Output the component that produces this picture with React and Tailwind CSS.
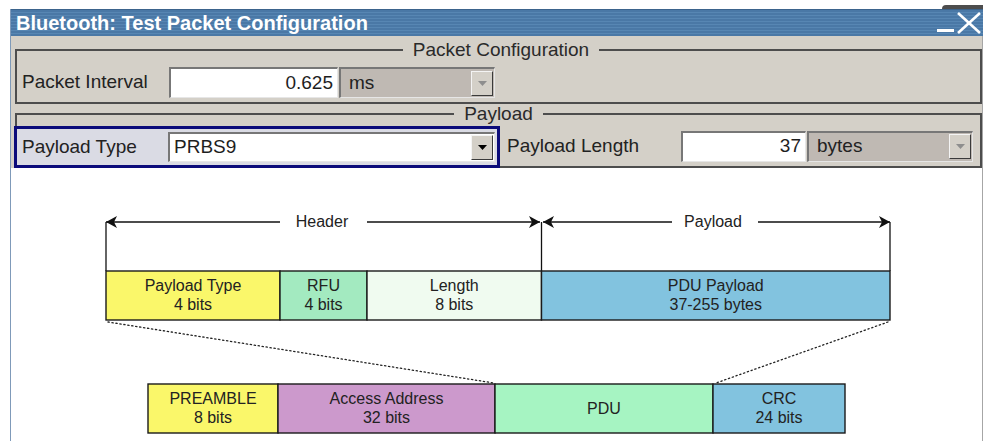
import React from 'react';

const ArrowButton = ({ disabled }) => (
  <div className="flex h-[25px] w-[22px] shrink-0 items-center justify-center border border-t-[#f4f4f4] border-l-[#f4f4f4] border-b-[#3a3a3a] border-r-[#3a3a3a] bg-[#d4d0c8]">
    <svg width="9" height="5" viewBox="0 0 9 5">
      <path d="M0 0h9L4.5 5z" fill={disabled ? '#8e8e8e' : '#000'} />
    </svg>
  </div>
);

const sunken = 'border-t-2 border-l-2 border-b border-r border-t-[#777] border-l-[#777] border-b-[#e6e6e6] border-r-[#e6e6e6]';

const NumberField = ({ value, width }) => (
  <div className={`flex h-[31px] items-center justify-end bg-white pr-[4px] text-[19px] text-[#1e1e1e] ${sunken} ${width}`}>
    {value}
  </div>
);

const UnitCombo = ({ unit, width }) => (
  <div className={`ml-px flex h-[31px] items-center justify-between bg-[#bfb9b3] pl-[8px] pr-[1px] text-[19px] text-[#222] ${sunken} ${width}`}>
    <span>{unit}</span>
    <ArrowButton disabled />
  </div>
);

const Head = ({ x, y, dir }) => {
  const d =
    dir === 'right'
      ? `M${x} ${y}L${x - 11} ${y - 6}L${x - 8} ${y}L${x - 11} ${y + 6}Z`
      : `M${x} ${y}L${x + 11} ${y - 6}L${x + 8} ${y}L${x + 11} ${y + 6}Z`;
  return <path d={d} fill="#111" />;
};

const Cell = ({ x, w, y, fill, lines }) => {
  const cx = x + w / 2;
  return (
    <g>
      <rect x={x} y={y} width={w} height={49} fill={fill} stroke="#1a1a1a" strokeWidth="1.4" />
      {lines.length === 1 ? (
        <text x={cx} y={y + 30} textAnchor="middle">{lines[0]}</text>
      ) : (
        <>
          <text x={cx} y={y + 20} textAnchor="middle">{lines[0]}</text>
          <text x={cx} y={y + 39} textAnchor="middle">{lines[1]}</text>
        </>
      )}
    </g>
  );
};

const PacketDiagram = () => (
  <svg width={971} height={274} viewBox="11 167 971 274" className="block" fontFamily="'Liberation Sans', Arial, sans-serif" fontSize="16" fill="#222">
    {/* dimension arrows */}
    <g stroke="#111" strokeWidth="1.3">
      <line x1="106" y1="221" x2="280" y2="221" />
      <line x1="367" y1="221" x2="540" y2="221" />
      <line x1="543" y1="221" x2="672" y2="221" />
      <line x1="758" y1="221" x2="890" y2="221" />
      <line x1="106" y1="221" x2="106" y2="270" />
      <line x1="541.5" y1="221" x2="541.5" y2="270" />
      <line x1="890" y1="221" x2="890" y2="270" />
    </g>
    <Head x={106} y={221} dir="left" />
    <Head x={540} y={221} dir="right" />
    <Head x={543} y={221} dir="left" />
    <Head x={890} y={221} dir="right" />
    <text x="322" y="226" textAnchor="middle">Header</text>
    <text x="713" y="226" textAnchor="middle">Payload</text>

    {/* PDU header + payload */}
    <Cell x={106} w={174} y={270} fill="#faf76a" lines={['Payload Type', '4 bits']} />
    <Cell x={280} w={87} y={270} fill="#a3eac0" lines={['RFU', '4 bits']} />
    <Cell x={367} w={174.5} y={270} fill="#f0fbf0" lines={['Length', '8 bits']} />
    <Cell x={541.5} w={348.5} y={270} fill="#82c3df" lines={['PDU Payload', '37-255 bytes']} />

    {/* zoom lines */}
    <g stroke="#222" strokeWidth="1.3" strokeDasharray="1.3 2.7" strokeLinecap="round">
      <line x1="108" y1="321" x2="494" y2="382" />
      <line x1="888" y1="321" x2="716" y2="382" />
    </g>

    {/* air packet */}
    <Cell x={148} w={130} y={383} fill="#faf76a" lines={['PREAMBLE', '8 bits']} />
    <Cell x={278} w={217} y={383} fill="#cc99cc" lines={['Access Address', '32 bits']} />
    <Cell x={495} w={218} y={383} fill="#a6f4c2" lines={['PDU']} />
    <Cell x={713} w={132} y={383} fill="#82c3df" lines={['CRC', '24 bits']} />
  </svg>
);

export default function App() {
  return (
    <div className="h-[441px] w-[983px] overflow-hidden bg-white font-['Liberation_Sans',Arial,sans-serif]">
      <div className="flex h-[9px] justify-end">
        <div className="mt-[5px] h-[4px] w-[41px] rounded-tl-[4px] bg-[#4d4d4d]" />
      </div>

      <div className="ml-[10px] flex h-[432px] flex-col border-l border-[#7f9ab9]">
        {/* title bar */}
        <div className="flex h-[27px] shrink-0 items-center justify-between border-t border-[#3b638c] bg-[repeating-linear-gradient(180deg,#4a78a6_0px,#4a78a6_2px,#5786b3_2px,#5786b3_3px)] pl-[5px]">
          <span className="text-[20px] font-bold leading-none text-white">Bluetooth: Test Packet Configuration</span>
          <svg width="46" height="26" viewBox="0 0 46 26">
            <line x1="0" y1="20.5" x2="17" y2="20.5" stroke="#fff" strokeWidth="3" />
            <line x1="21" y1="3" x2="43" y2="23" stroke="#fff" strokeWidth="2.6" />
            <line x1="43" y1="3" x2="21" y2="23" stroke="#fff" strokeWidth="2.6" />
          </svg>
        </div>

        <div className="flex flex-1 flex-col border-r border-[#a6a6a6] bg-[#d4d0c8]">
          <div className="pl-[4px]">
            <fieldset className="mt-[5px] border-2 border-[#4d4d4d] pb-[4px] pl-[5px] pt-[8px]">
              <legend className="mx-auto px-[10px] text-[19px] leading-[18px] text-[#2a2a2a]">Packet Configuration</legend>
              <div className="flex items-center">
                <span className="w-[147px] text-[19px] text-[#222]">Packet Interval</span>
                <NumberField value="0.625" width="w-[169px]" />
                <UnitCombo unit="ms" width="w-[156px]" />
              </div>
            </fieldset>

            <fieldset className="mt-px border-2 border-[#4d4d4d] pt-[3px]">
              <legend className="mx-auto px-[10px] text-[19px] leading-[18px] text-[#2a2a2a]">Payload</legend>
              <div className="flex items-center">
                <div className="relative -mb-[2px] -ml-[3px] flex h-[42px] w-[486px] items-center border-[3px] border-[#0b0b7a] bg-[#dadbe4] pl-[5px]">
                  <span className="w-[146px] text-[19px] text-[#222]">Payload Type</span>
                  <div className={`flex h-[30px] w-[327px] items-center justify-between bg-white pl-[4px] pr-px text-[19px] text-[#1e1e1e] ${sunken}`}>
                    <span>PRBS9</span>
                    <ArrowButton />
                  </div>
                </div>
                <span className="ml-[7px] w-[174px] text-[19px] text-[#222]">Payload Length</span>
                <NumberField value="37" width="w-[125px]" />
                <UnitCombo unit="bytes" width="w-[166px]" />
              </div>
            </fieldset>
          </div>

          <div className="flex-1 overflow-hidden bg-white">
            <PacketDiagram />
          </div>
        </div>
      </div>
    </div>
  );
}
